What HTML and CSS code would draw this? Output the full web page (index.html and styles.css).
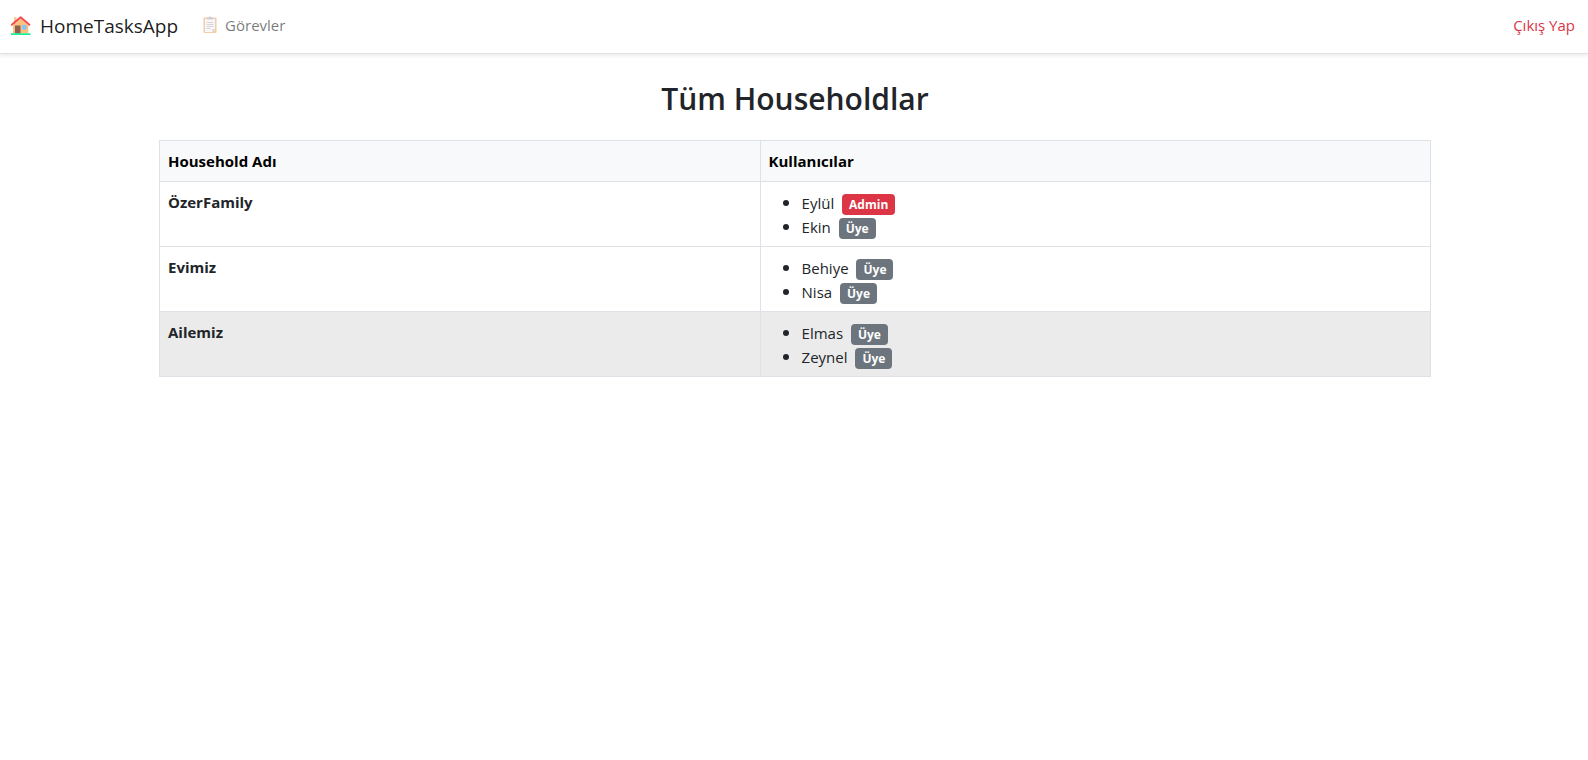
FILE: index.html
```html
<!DOCTYPE html>
<html lang="tr">
<head>
<meta charset="utf-8">
<meta name="viewport" content="width=device-width, initial-scale=1">
<title>HomeTasksApp</title>
<link rel="stylesheet" href="styles.css">
</head>
<body>
<nav class="navbar">
  <a class="brand" href="#">
    <svg class="brand-icon" viewBox="0 0 22 22" aria-hidden="true">
      <path fill="#f5cc98" d="M4 2h2.500v7H4z"/>
      <path fill="#f9c27e" d="M10.500 3l7.800 7v8.500H3V10z"/>
      <path fill="#8d6052" d="M5 10.500h5.500v8H5z"/>
      <path fill="#83c5f5" d="M12 10h4.500v4.500H12z"/>
      <path fill="none" stroke="#f8484f" stroke-width="1.800" stroke-linejoin="round" stroke-linecap="round" d="M1.800 9.800l8.800-7.500 8.800 7.500"/>
      <path fill="#12f09a" d="M1 18.300h19.500V20H1z"/>
    </svg>
    <span>HomeTasksApp</span>
  </a>
  <a class="nav-link" href="#">
    <svg class="nav-icon" viewBox="0 0 14 18" aria-hidden="true">
      <rect x=".5" y="1.500" width="13" height="15.500" rx="1" fill="#e9a55e"/>
      <path fill="#f3f1f7" d="M2 3h10v10l-3 3H2z"/>
      <path fill="#cbc4d0" d="M12 13h-3v3z"/>
      <path fill="#a9a3b3" d="M4 1.500h2V.5h2v1h2v2H4z"/>
      <path stroke="#b8b1c2" fill="none" d="M3.500 6.500h7M3.500 8.500h7M3.500 10.500h7M3.500 12.500h4"/>
    </svg>
    <span>Görevler</span>
  </a>
  <a class="logout" href="#">Çıkış Yap</a>
</nav>
<main class="container">
  <h2 class="title">Tüm Householdlar</h2>
  <table class="table">
    <thead>
      <tr><th class="name-col" scope="col">Household Adı</th><th scope="col">Kullanıcılar</th></tr>
    </thead>
    <tbody>
      <tr>
        <td class="name">ÖzerFamily</td>
        <td><ul class="users">
          <li>Eylül <span class="badge badge-admin">Admin</span></li>
          <li>Ekin <span class="badge">Üye</span></li>
        </ul></td>
      </tr>
      <tr>
        <td class="name">Evimiz</td>
        <td><ul class="users">
          <li>Behiye <span class="badge">Üye</span></li>
          <li>Nisa <span class="badge">Üye</span></li>
        </ul></td>
      </tr>
      <tr class="active">
        <td class="name">Ailemiz</td>
        <td><ul class="users">
          <li>Elmas <span class="badge">Üye</span></li>
          <li>Zeynel <span class="badge">Üye</span></li>
        </ul></td>
      </tr>
    </tbody>
  </table>
</main>
</body>
</html>
```
FILE: styles.css
```css
* { box-sizing: border-box; }

body {
  margin: 0;
  background: #fff;
  color: #212529;
  font-family: "Segoe UI", "Open Sans", "Noto Sans", sans-serif;
  font-size: 15px;
  line-height: 24px;
}

.navbar {
  display: flex;
  align-items: center;
  padding: 11px 13px 12px 10px;
  border-bottom: 1px solid #dee2e6;
  box-shadow: 0 2px 4px rgba(0, 0, 0, .08);
}

.navbar a { text-decoration: none; }

.brand {
  display: flex;
  align-items: center;
  gap: 8px;
  color: rgba(0, 0, 0, .9);
  font-size: 19px;
  line-height: 30px;
}

.brand-icon { width: 22px; height: 22px; }

.nav-link,
.logout { padding-bottom: 2px; }

.nav-link {
  display: flex;
  align-items: center;
  gap: 8px;
  margin-left: 25px;
  color: rgba(0, 0, 0, .55);
}

.nav-icon { width: 14px; height: 18px; opacity: .55; }

.logout { margin-left: auto; color: #dc3545; }

.container {
  width: 100%;
  max-width: 1320px;
  margin: 0 auto;
  padding: 26px 23px 24px 25px;
}

.title {
  margin: 0 0 22px;
  font-size: 30px;
  font-weight: 600;
  line-height: 38px;
  text-align: center;
}

.table {
  width: 100%;
  border-collapse: collapse;
}

.table th,
.table td {
  padding: 8px;
  border: 1px solid #dee2e6;
  text-align: left;
  vertical-align: top;
}

.table th {
  background: #f8f9fa;
  color: #000;
  font-weight: 700;
}

.name-col { width: 47.25%; }

.table .name { font-weight: 700; }

.active { background: #ebebeb; }

.users {
  margin: 0;
  padding-left: 33px;
}

.users li::marker { font-size: 18px; }

.users li { height: 24px; }

.badge {
  display: inline-block;
  margin: -2px 0 -2px 4px;
  padding: 4px 7px;
  border-radius: 4px;
  background: #6c757d;
  color: #fff;
  font-size: 12px;
  font-weight: 700;
  line-height: 13px;
  vertical-align: middle;
}

.badge-admin { background: #dc3545; }
```
